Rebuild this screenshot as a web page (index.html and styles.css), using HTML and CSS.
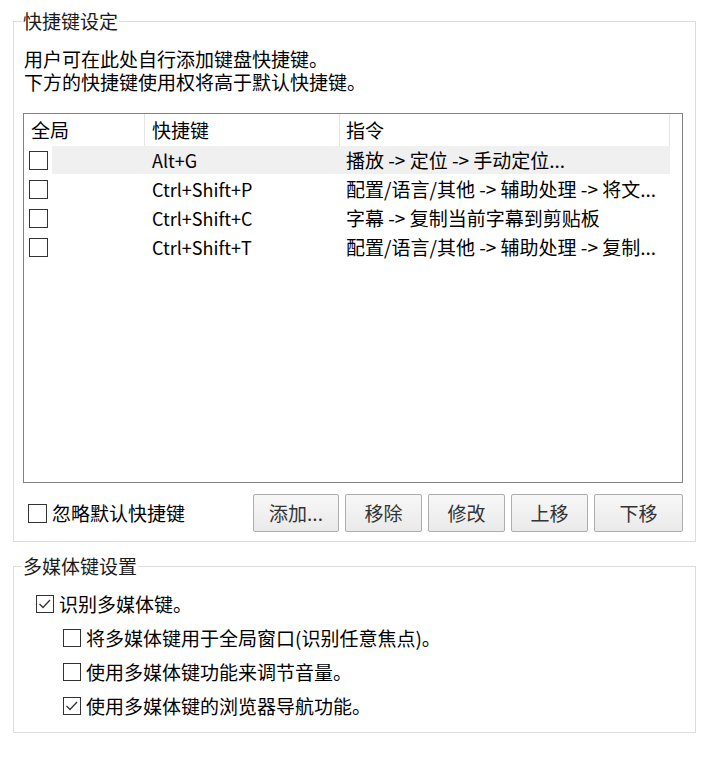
FILE: index.html
```html
<!DOCTYPE html>
<html lang="zh-CN">
<head>
<meta charset="utf-8">
<title>快捷键设定</title>
<link rel="stylesheet" href="styles.css">
</head>
<body>
<fieldset class="group group-shortcuts">
  <legend class="group-title">快捷键设定</legend>
  <p class="desc">用户可在此处自行添加键盘快捷键。<br>下方的快捷键使用权将高于默认快捷键。</p>
  <div class="listview">
    <div class="lv-header">
      <div class="lv-hcell col1">全局</div>
      <div class="lv-hcell col2">快捷键</div>
      <div class="lv-hcell col3">指令</div>
    </div>
    <div class="lv-row hot">
      <div class="lv-check"><span class="cb cb-lg"></span></div>
      <div class="lv-cell col1rest"></div>
      <div class="lv-cell col2">Alt+G</div>
      <div class="lv-cell col3">播放 -&gt; 定位 -&gt; 手动定位...</div>
    </div>
    <div class="lv-row">
      <div class="lv-check"><span class="cb cb-lg"></span></div>
      <div class="lv-cell col1rest"></div>
      <div class="lv-cell col2">Ctrl+Shift+P</div>
      <div class="lv-cell col3">配置/语言/其他 -&gt; 辅助处理 -&gt; 将文...</div>
    </div>
    <div class="lv-row">
      <div class="lv-check"><span class="cb cb-lg"></span></div>
      <div class="lv-cell col1rest"></div>
      <div class="lv-cell col2">Ctrl+Shift+C</div>
      <div class="lv-cell col3">字幕 -&gt; 复制当前字幕到剪贴板</div>
    </div>
    <div class="lv-row">
      <div class="lv-check"><span class="cb cb-lg"></span></div>
      <div class="lv-cell col1rest"></div>
      <div class="lv-cell col2">Ctrl+Shift+T</div>
      <div class="lv-cell col3">配置/语言/其他 -&gt; 辅助处理 -&gt; 复制...</div>
    </div>
  </div>
  <div class="actions">
    <label class="check ignore"><span class="cb cb-lg"></span><span class="check-text">忽略默认快捷键</span></label>
    <div class="buttons">
      <button class="btn btn-add">添加...</button>
      <button class="btn btn-mid">移除</button>
      <button class="btn btn-mid">修改</button>
      <button class="btn btn-mid">上移</button>
      <button class="btn btn-last">下移</button>
    </div>
  </div>
</fieldset>

<fieldset class="group group-media">
  <legend class="group-title">多媒体键设置</legend>
  <div class="options">
    <label class="opt"><span class="cb cb-sm"><svg class="tick" viewBox="0 0 18 18" width="18" height="18"><polyline points="3.5,9 7,12.5 14,5" fill="none" stroke="#333" stroke-width="1.3"/></svg></span><span class="check-text">识别多媒体键。</span></label>
    <label class="opt sub"><span class="cb cb-sm"></span><span class="check-text">将多媒体键用于全局窗口(识别任意焦点)。</span></label>
    <label class="opt sub"><span class="cb cb-sm"></span><span class="check-text">使用多媒体键功能来调节音量。</span></label>
    <label class="opt sub"><span class="cb cb-sm"><svg class="tick" viewBox="0 0 18 18" width="18" height="18"><polyline points="3.5,9 7,12.5 14,5" fill="none" stroke="#333" stroke-width="1.3"/></svg></span><span class="check-text">使用多媒体键的浏览器导航功能。</span></label>
  </div>
</fieldset>
</body>
</html>
```

FILE: styles.css
```css
* {
  box-sizing: border-box;
}

html,
body {
  margin: 0;
  padding: 0;
  background: #ffffff;
}

body {
  font-family: "Noto Sans CJK SC", "Microsoft YaHei", sans-serif;
  font-size: 19px;
  color: #000000;
  padding-top: 10px;
}

.group {
  width: 683px;
  margin: 0 0 0 13px;
  border: 1px solid #dcdcdc;
  padding: 15px 12px 9px 9px;
  min-width: 0;
}

.group-media {
  margin-top: 13px;
  padding: 10px 12px 9px 9px;
}

.group-title {
  margin-left: -1px;
  padding: 0 1px;
  line-height: 22px;
  color: #1a1a1a;
}

.desc {
  margin: 0;
  padding-left: 1px;
  line-height: 23px;
}

/* list view */
.listview {
  margin-top: 20px;
  height: 370px;
  border: 1px solid #828282;
  background: #ffffff;
  overflow: hidden;
}

.lv-header {
  display: flex;
  height: 32px;
}

.lv-hcell {
  border-right: 1px solid #e5e5e5;
  line-height: 32px;
  white-space: nowrap;
  padding-left: 7px;
}

.lv-hcell.col1 {
  width: 121px;
}

.lv-hcell.col2 {
  width: 195px;
}

.lv-hcell.col3 {
  width: 330px;
  padding-left: 6px;
}

.lv-row {
  display: flex;
  height: 28px;
  margin-bottom: 1px;
  line-height: 28px;
  white-space: nowrap;
}

.lv-check {
  width: 28px;
  display: flex;
  align-items: center;
  padding-left: 5px;
}

.lv-cell {
  height: 28px;
  overflow: hidden;
}

.lv-cell.col1rest {
  width: 93px;
}

.lv-cell.col2 {
  width: 195px;
  padding-left: 7px;
  font-size: 18px;
}

.lv-cell.col3 {
  width: 330px;
  padding-left: 6px;
}

.lv-row.hot .lv-cell {
  background: #f0f0f0;
}

/* checkboxes */
.cb {
  display: inline-flex;
  align-items: center;
  justify-content: center;
  flex: none;
  border: 1px solid #333333;
  background: #ffffff;
}

.cb-lg {
  width: 19px;
  height: 19px;
}

.cb-sm {
  width: 18px;
  height: 18px;
}

.tick {
  display: block;
  flex: none;
}

.check,
.opt {
  display: flex;
  align-items: center;
  gap: 5px;
  line-height: 22px;
}

/* actions row */
.actions {
  margin-top: 11px;
  height: 38px;
  display: flex;
  align-items: center;
  justify-content: space-between;
}

.check.ignore {
  margin-left: 5px;
}

.buttons {
  display: flex;
  gap: 6px;
}

.btn {
  height: 38px;
  padding: 0;
  border: 1px solid #adadad;
  border-radius: 2px;
  background: linear-gradient(#f7f7f7, #eaeaea);
  font-family: inherit;
  font-size: 19px;
  line-height: 22px;
  color: #333333;
}

.btn-add {
  width: 86px;
}

.btn-mid {
  width: 77px;
}

.btn-last {
  width: 89px;
}

/* multimedia options */
.options {
  padding-left: 13px;
}

.opt {
  height: 34px;
}

.opt.sub {
  padding-left: 27px;
}
```
